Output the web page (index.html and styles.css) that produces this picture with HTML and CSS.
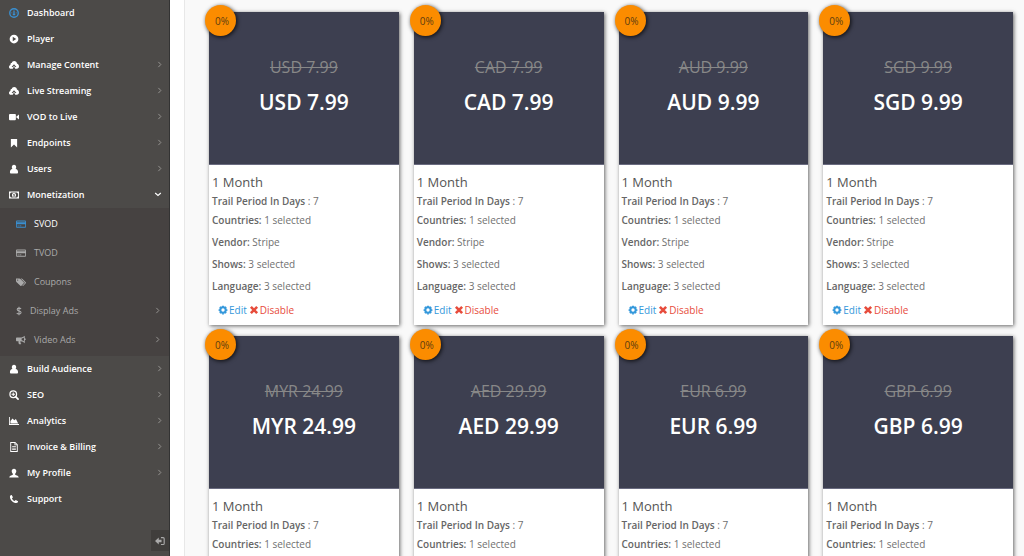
FILE: index.html
```html
<!DOCTYPE html>
<html lang="en">
<head>
    <meta charset="UTF-8">
    <meta name="viewport" content="width=device-width, initial-scale=1.0">
    <title>Subscription Plans</title>
    <link rel="stylesheet" href="styles.css">
</head>
<body>
    <!-- Icons shared by the menu and the cards -->
    <svg class="icon-defs" width="0" height="0" aria-hidden="true">
        <symbol id="i-dashboard" viewBox="0 0 16 16"><circle cx="8" cy="8" r="6.8" fill="none" stroke="currentColor" stroke-width="2.2"/><path d="M7 4h2v5h1v2.500H6V9h1zM3.800 7h1.500v1.500H3.800zM10.800 7h1.500v1.500h-1.500z"/></symbol>
        <symbol id="i-player" viewBox="0 0 16 16"><path fill-rule="evenodd" d="M8 1a7 7 0 1 0 0 14A7 7 0 0 0 8 1zM6 4.500 11.500 8 6 11.500z"/></symbol>
        <symbol id="i-cloud" viewBox="0 0 16 16"><path fill-rule="evenodd" d="M0 11.200c0-1.700 1-2.800 2.300-3.200C2 5.500 3 4.800 4.300 4.800 4.800 2.700 6.300 1.500 8.300 1.500c2.500 0 4.300 1.800 4.400 4.200C15 6.500 16 8.500 16 10.500c0 2.200-1.400 3.500-3.500 3.500H9.700v-3h2.200L8 6.600 4.100 11h2.200v3H3C1.200 14 0 12.900 0 11.200z"/><path d="M7.200 9.500h1.600v3H7.200z"/></symbol>
        <symbol id="i-video" viewBox="0 0 16 16"><rect x="0" y="3" width="11" height="10" rx="1.500"/><path d="M11.500 7.500 16 4v8l-4.500-3.500z"/></symbol>
        <symbol id="i-bookmark" viewBox="0 0 16 16"><path d="M3 1.500h10V15l-5-4.500L3 15z"/></symbol>
        <symbol id="i-user" viewBox="0 0 16 16"><path d="M8 1c2.200 0 3.500 1.700 3.500 4 0 1.200-.4 2.300-1 3 2.700.4 4 2 4 5 0 1.300-.8 2-2 2h-9c-1.200 0-2-.7-2-2 0-3 1.300-4.600 4-5-.6-.7-1-1.800-1-3 0-2.300 1.300-4 3.500-4z"/></symbol>
        <symbol id="i-money" viewBox="0 0 16 16"><path fill-rule="evenodd" d="M0 2.500h16v11H0zm3 1.600A2 2 0 0 1 1.400 5.700v4.600A2 2 0 0 1 3 11.900h10a2 2 0 0 1 1.600-1.600V5.700A2 2 0 0 1 13 4.100z"/><path fill-rule="evenodd" d="M8 4.300c-2 0-3.200 1.600-3.200 3.700S6 11.700 8 11.700s3.200-1.600 3.200-3.700S10 4.300 8 4.300zm-.4 1.500h1.300v3.400h.8v1H6.500v-1h1V7.400l-.8.3V6.600z"/></symbol>
        <symbol id="i-card" viewBox="0 0 16 16"><path fill-rule="evenodd" d="M1.500 2.500h13A1.500 1.500 0 0 1 16 4v8.500a1.500 1.500 0 0 1-1.500 1.500h-13A1.500 1.500 0 0 1 0 12.500V4a1.500 1.500 0 0 1 1.500-1.500zM1.300 4v1.200h13.400V4zm0 4.300v4.200h13.400V8.300z"/><path d="M2.500 10.300h2v1.200h-2zM5.500 10.300h3v1.200h-3z"/></symbol>
        <symbol id="i-tags" viewBox="0 0 16 16"><path fill-rule="evenodd" d="M0 2.500h5.500c.6 0 1.200.3 1.600.7l5.300 5.300c.5.500.5 1.100 0 1.600L8.600 14c-.5.500-1.100.5-1.600 0L1 8.500C.4 8 0 7.500 0 6.500zm2.700 1.400a1 1 0 1 0 0 2 1 1 0 0 0 0-2z"/><path d="M7.500 2.500h1.300c.6 0 1.200.3 1.600.7l5.200 5.300c.5.500.5 1.100 0 1.600L11.700 14c-.5.500-1.100.4-1.600 0l3.400-3.600c.6-.7.600-1.500 0-2.200z"/></symbol>
        <symbol id="i-dollar" viewBox="0 0 10 16"><path d="M8.500 4.700C7.700 3.700 6.500 3.200 5 3.200c-1.900 0-3.100.8-3.100 2.200C1.900 8.700 8.500 7 8.500 10.600c0 1.500-1.400 2.400-3.400 2.400-1.700 0-3-.6-3.900-1.600M5 .8v14.400" fill="none" stroke="currentColor" stroke-width="1.700"/></symbol>
        <symbol id="i-horn" viewBox="0 0 16 16"><path fill-rule="evenodd" d="M14 1v4.300a1.600 1.600 0 0 1 0 3.200V13c-2-1.700-4-2.700-6.500-3-.8.500-.7 1.400 0 2-.4.800.2 1.300 1 2-.8 1.200-3 1-3.900.2-.5-1.500-1-2.700-.5-4.300H1.600C.7 9.900 0 9.200 0 8.300V5.700C0 4.800.7 4.100 1.600 4.100H7C9.500 4 12 2.700 14 1zm-1.300 3C11.200 5 10.200 5.200 9 5.500v2.800c1.300.2 2.500.7 3.700 1.500z"/></symbol>
        <symbol id="i-search" viewBox="0 0 16 16"><path d="m10.500 10.500 4 4" fill="none" stroke="currentColor" stroke-width="2.800" stroke-linecap="round"/><circle cx="6.800" cy="6.800" r="5.300" fill="none" stroke="currentColor" stroke-width="2"/><path d="M4 6h2V4h1.600v2h2v1.600h-2v2H6v-2H4z"/></symbol>
        <symbol id="i-chart" viewBox="0 0 18 16"><path d="M0 1h1.500v12.500H18V15H0z"/><path d="M2.600 12.500V8L6.300 3.300 9.500 6.500l3-2 4 8z"/></symbol>
        <symbol id="i-file" viewBox="0 0 16 16"><path fill-rule="evenodd" d="M2 0h8l4 4v12H2zm1.500 1.500v13h9V5.300H8.800V1.500zm6.600.3V4h2.200z"/><path d="M5 6.800h6V8H5zM5 9.200h6v1.200H5zM5 11.600h6v1.200H5z"/></symbol>
        <symbol id="i-profile" viewBox="0 0 16 16"><path d="M8 1c2.300 0 3.700 1.600 3.700 3.800 0 1.800-.8 3.500-1.900 4.400v1c0 .8 5.700 1.500 5.700 4.800H.5c0-3.300 5.700-4 5.700-4.800v-1C5.100 8.300 4.300 6.600 4.300 4.800 4.300 2.600 5.700 1 8 1z"/></symbol>
        <symbol id="i-phone" viewBox="0 0 16 16"><path d="M4.300 1.500 6.300 5.300 4.700 7c.8 1.900 2.400 3.500 4.300 4.300l1.700-1.600 3.800 2c.2 1.500-1.100 2.800-2.800 2.800C6.700 14.500 1.500 9.300 1.500 4.300c0-1.700 1.300-3 2.800-2.800z"/></symbol>
        <symbol id="i-right" viewBox="0 0 8 12"><path d="m2 1.500 4.300 4.500L2 10.500" fill="none" stroke="currentColor" stroke-width="1.600"/></symbol>
        <symbol id="i-down" viewBox="0 0 12 8"><path d="m1.500 1.500 4.500 4 4.500-4" fill="none" stroke="currentColor" stroke-width="1.900"/></symbol>
        <symbol id="i-collapse" viewBox="0 0 16 16"><path d="M0 8l6-5.500V6h4.500v4H6v3.500z"/><path d="M9.500 2.500H13A1.700 1.700 0 0 1 14.700 4.200v7.600a1.700 1.700 0 0 1-1.700 1.700H9.500" fill="none" stroke="currentColor" stroke-width="1.800"/></symbol>
        <symbol id="i-cog" viewBox="0 0 16 16"><circle cx="8" cy="8" r="4.300" fill="none" stroke="currentColor" stroke-width="3.200"/><path d="M8 1v2M8 13v2M1 8h2M13 8h2M3 3l1.500 1.500M11.500 11.500l1.500 1.500M3 13l1.500-1.500M11.500 4.500l1.500-1.500" fill="none" stroke="currentColor" stroke-width="2.800"/></symbol>
        <symbol id="i-times" viewBox="0 0 16 16"><path d="m3 3 10 10M13 3 3 13" fill="none" stroke="currentColor" stroke-width="4.200"/></symbol>
    </svg>

    <!-- Sidebar -->
    <aside class="sidebar">
        <nav class="menu">
            <a class="menu-item active" href="#"><svg class="icon"><use href="#i-dashboard"/></svg><span>Dashboard</span></a>
            <a class="menu-item" href="#"><svg class="icon"><use href="#i-player"/></svg><span>Player</span></a>
            <a class="menu-item" href="#"><svg class="icon"><use href="#i-cloud"/></svg><span>Manage Content</span><svg class="arrow"><use href="#i-right"/></svg></a>
            <a class="menu-item" href="#"><svg class="icon"><use href="#i-cloud"/></svg><span>Live Streaming</span><svg class="arrow"><use href="#i-right"/></svg></a>
            <a class="menu-item" href="#"><svg class="icon"><use href="#i-video"/></svg><span>VOD to Live</span><svg class="arrow"><use href="#i-right"/></svg></a>
            <a class="menu-item" href="#"><svg class="icon"><use href="#i-bookmark"/></svg><span>Endpoints</span><svg class="arrow"><use href="#i-right"/></svg></a>
            <a class="menu-item" href="#"><svg class="icon"><use href="#i-user"/></svg><span>Users</span><svg class="arrow"><use href="#i-right"/></svg></a>
            <a class="menu-item" href="#"><svg class="icon"><use href="#i-money"/></svg><span>Monetization</span><svg class="arrow open"><use href="#i-down"/></svg></a>
            <div class="submenu">
                <a class="submenu-item active" href="#"><svg class="icon"><use href="#i-card"/></svg><span>SVOD</span></a>
                <a class="submenu-item" href="#"><svg class="icon"><use href="#i-card"/></svg><span>TVOD</span></a>
                <a class="submenu-item" href="#"><svg class="icon"><use href="#i-tags"/></svg><span>Coupons</span></a>
                <a class="submenu-item" href="#"><svg class="icon narrow"><use href="#i-dollar"/></svg><span>Display Ads</span><svg class="arrow"><use href="#i-right"/></svg></a>
                <a class="submenu-item" href="#"><svg class="icon"><use href="#i-horn"/></svg><span>Video Ads</span><svg class="arrow"><use href="#i-right"/></svg></a>
            </div>
            <a class="menu-item" href="#"><svg class="icon"><use href="#i-user"/></svg><span>Build Audience</span><svg class="arrow"><use href="#i-right"/></svg></a>
            <a class="menu-item" href="#"><svg class="icon"><use href="#i-search"/></svg><span>SEO</span><svg class="arrow"><use href="#i-right"/></svg></a>
            <a class="menu-item" href="#"><svg class="icon"><use href="#i-chart"/></svg><span>Analytics</span><svg class="arrow"><use href="#i-right"/></svg></a>
            <a class="menu-item" href="#"><svg class="icon"><use href="#i-file"/></svg><span>Invoice &amp; Billing</span><svg class="arrow"><use href="#i-right"/></svg></a>
            <a class="menu-item" href="#"><svg class="icon"><use href="#i-profile"/></svg><span>My Profile</span><svg class="arrow"><use href="#i-right"/></svg></a>
            <a class="menu-item" href="#"><svg class="icon"><use href="#i-phone"/></svg><span>Support</span></a>
        </nav>
        <button class="collapse-btn" type="button" aria-label="Collapse menu"><svg class="icon"><use href="#i-collapse"/></svg></button>
    </aside>

    <!-- Plans -->
    <main class="content">
        <div class="plans" id="plans"></div>
    </main>

    <script src="script.js"></script>
</body>
</html>
```

FILE: styles.css
```css
* {
    margin: 0;
    padding: 0;
    box-sizing: border-box;
}

body {
    display: flex;
    height: 100vh;
    overflow: hidden;
    background-color: #fff;
    color: #707070;
    font-family: "Open Sans", sans-serif;
    font-size: 10px;
}

a {
    color: inherit;
    text-decoration: none;
}

.icon-defs {
    position: absolute;
}

.icon {
    width: 10px;
    height: 10px;
    flex-shrink: 0;
    fill: currentColor;
}

/* Sidebar */
.sidebar {
    display: flex;
    flex-direction: column;
    justify-content: space-between;
    flex: 0 0 170px;
    background-color: #4c4a48;
    border-right: 1px solid #333;
    color: #fff;
}

.menu-item,
.submenu-item {
    display: flex;
    align-items: center;
    font-size: 9px;
}

.menu-item {
    height: 26px;
    padding: 0 7px 1px 9px;
    gap: 8px;
    font-weight: 600;
}

.menu-item.active .icon,
.submenu-item.active .icon {
    color: #3a8fd0;
}

.arrow {
    width: 5px;
    height: 7px;
    margin-left: auto;
    color: #9a9896;
}

.arrow.open {
    width: 8px;
    height: 5px;
    color: #fff;
}

.submenu {
    padding: 1px 0 2px;
    background-color: #464241;
}

.submenu-item {
    height: 29px;
    padding: 0 9px 0 16px;
    gap: 8px;
    color: #aaa;
}

.submenu-item.active {
    color: #fff;
}

.submenu-item .icon.narrow {
    width: 6px;
}

.collapse-btn {
    display: flex;
    align-items: center;
    justify-content: center;
    align-self: flex-end;
    width: 18px;
    height: 21px;
    margin-bottom: 5px;
    border: none;
    background-color: #403e3c;
    color: #aaa;
    cursor: pointer;
}

/* Plans */
.content {
    flex: 1;
    margin-left: 14px;
    padding: 12px 11px 12px 24px;
    border-left: 1px solid #e8e8e8;
    background-color: #f9f9f9;
}

.plans {
    display: grid;
    grid-template-columns: repeat(4, 1fr);
    gap: 11px 15px;
}

.plan {
    position: relative;
    background-color: #fff;
    box-shadow: 1px 1px 4px rgba(0, 0, 0, 0.6);
}

.badge {
    position: absolute;
    top: -7px;
    left: -4px;
    width: 31px;
    height: 31px;
    padding-left: 3px;
    border-radius: 50%;
    background-color: #fb8c00;
    box-shadow: 1px 1px 4px rgba(0, 0, 0, 0.8);
    color: #5c3c10;
    line-height: 33px;
    text-align: center;
}

.price {
    height: 153px;
    padding-top: 44px;
    background-color: #3d3f50;
    border-bottom: 1px solid #6a6b80;
    text-align: center;
}

.price del {
    display: block;
    color: #888;
    font-size: 16px;
    line-height: 22px;
}

.price strong {
    display: block;
    margin-top: 9px;
    color: #fff;
    font-size: 21px;
    font-weight: 600;
    line-height: 30px;
}

.details {
    padding: 7px 3px 4px;
    line-height: 22px;
}

.details h2 {
    margin-bottom: 1px;
    color: #555;
    font-size: 13px;
    font-weight: 500;
    line-height: 20px;
}

.details b {
    color: #666;
    font-weight: 600;
}

.details .trial {
    line-height: 16px;
}

.actions {
    display: flex;
    align-items: center;
    gap: 2px;
    margin-top: 2px;
    padding-left: 6px;
}

.actions a {
    display: flex;
    align-items: center;
    gap: 1px;
}

.edit {
    color: #3498db;
}

.disable {
    color: #e74c3c;
}
```

FILE: script.js
```js
const plans = [
    'USD 7.99', 'CAD 7.99', 'AUD 9.99', 'SGD 9.99',
    'MYR 24.99', 'AED 29.99', 'EUR 6.99', 'GBP 6.99'
];

document.getElementById('plans').innerHTML = plans.map(price => `
    <article class="plan">
        <div class="price"><del>${price}</del><strong>${price}</strong></div>
        <div class="details">
            <h2>1 Month</h2>
            <p class="trial"><b>Trail Period In Days</b> : 7</p>
            <p><b>Countries:</b> 1 selected</p>
            <p><b>Vendor:</b> Stripe</p>
            <p><b>Shows:</b> 3 selected</p>
            <p><b>Language:</b> 3 selected</p>
            <div class="actions">
                <a class="edit" href="#"><svg class="icon"><use href="#i-cog"/></svg>Edit</a>
                <a class="disable" href="#"><svg class="icon"><use href="#i-times"/></svg>Disable</a>
            </div>
        </div>
        <span class="badge">0%</span>
    </article>`).join('');
```
